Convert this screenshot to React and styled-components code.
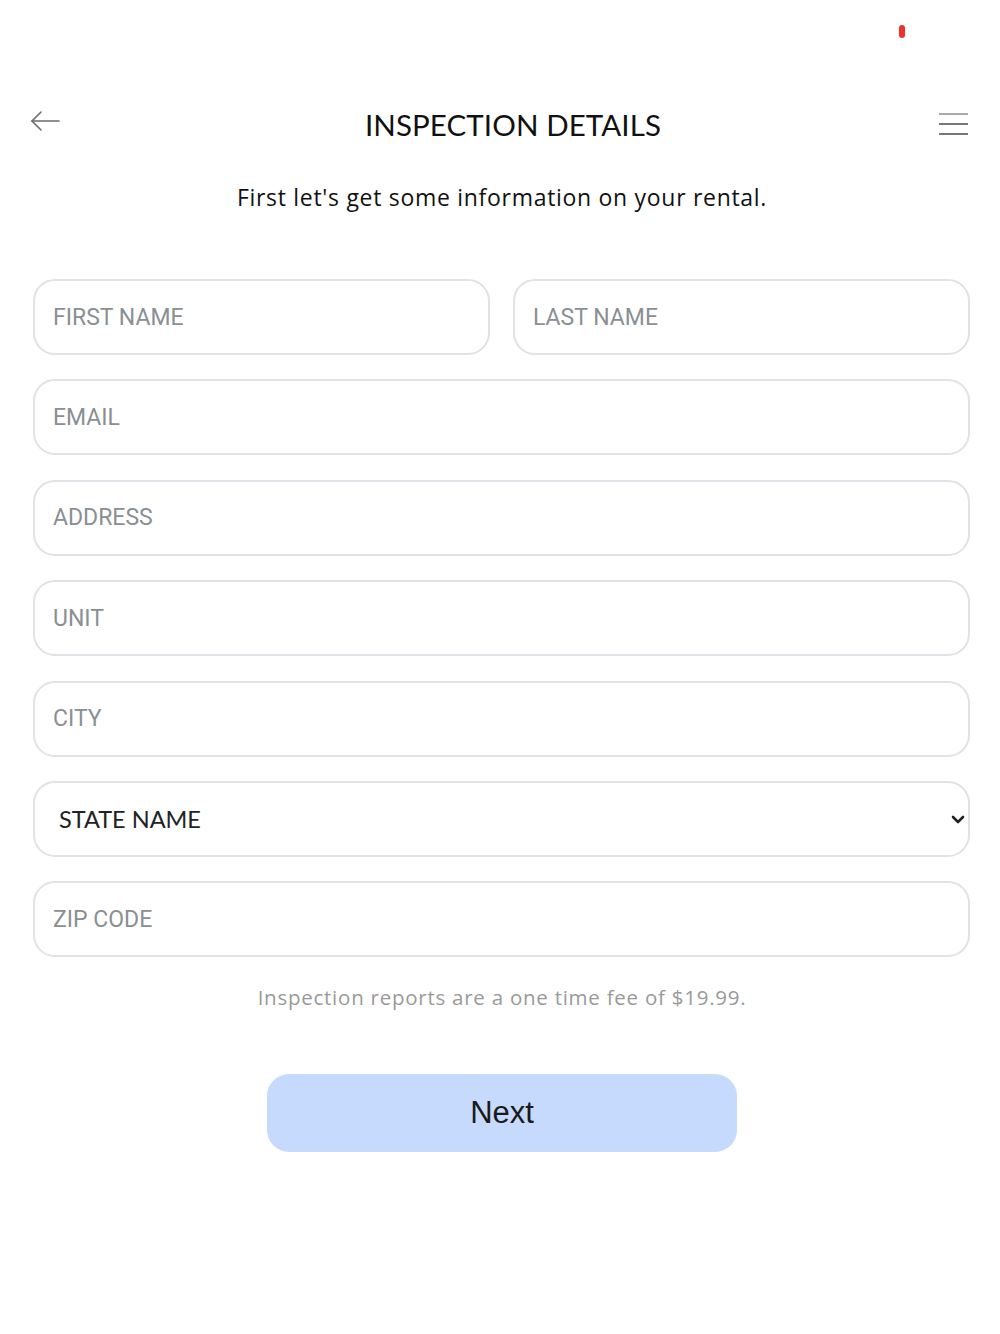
import React from "react";
import styled, { createGlobalStyle } from "styled-components";

const Global = createGlobalStyle`
  html, body { margin: 0; padding: 0; background: #fff; }
  body { font-family: "Open Sans", "Liberation Sans", sans-serif; }
  * { box-sizing: border-box; }
`;

const Page = styled.div`
  width: 1000px;
  min-height: 1334px;
  background: #fff;
  display: flex;
  flex-direction: column;
  position: relative;
`;

const StatusDot = styled.div`
  position: absolute;
  left: 899px;
  top: 25px;
  width: 6px;
  height: 13px;
  border-radius: 3px;
  background: #f0302a;
`;

const Header = styled.header`
  display: grid;
  grid-template-columns: 60px 1fr 60px;
  align-items: center;
  padding: 99px 30px 0 30px;
  height: 146px;
`;

const IconButton = styled.button`
  border: 0;
  background: none;
  padding: 0;
  width: 34px;
  height: 34px;
  display: flex;
  align-items: center;
  justify-content: ${(p) => (p.$right ? "flex-end" : "flex-start")};
  justify-self: ${(p) => (p.$right ? "end" : "start")};
  cursor: pointer;
  position: relative;
  left: ${(p) => (p.$right ? "-2px" : "0")};
  top: ${(p) => (p.$right ? "1px" : "-2px")};
`;

const Title = styled.h1`
  margin: 0;
  text-align: center;
  font-family: "Lato", "Open Sans", sans-serif;
  font-weight: 400;
  font-size: 29.5px;
  letter-spacing: 0.1px;
  color: #111;
  padding-left: 26px;
  position: relative;
  top: 2px;
`;

const Subtitle = styled.p`
  margin: 35px 0 0;
  text-align: center;
  font-family: "Open Sans", "Lato", sans-serif;
  font-size: 23px;
  color: #111;
  letter-spacing: 0.7px;
  padding-left: 4px;
`;

const Form = styled.form`
  display: flex;
  flex-direction: column;
  gap: 24.4px;
  padding: 0 30px 0 33px;
  margin-top: 66px;
`;

const Row = styled.div`
  display: grid;
  grid-template-columns: 1fr 1fr;
  gap: 23px;
`;

const Field = styled.input`
  width: 100%;
  height: 76px;
  border: 2px solid #dfe2e6;
  border-radius: 22px;
  padding: 0 18px;
  font-family: Roboto, "Liberation Sans", sans-serif;
  font-size: 23px;
  color: #333;
  background: #fff;
  outline: none;
  &::placeholder {
    color: #8a8f94;
  }
`;

const SelectWrap = styled.div`
  position: relative;
`;

const Select = styled.select`
  width: 100%;
  height: 76px;
  border: 2px solid #dfe2e6;
  border-radius: 22px;
  padding: 0 24px;
  font-family: "Lato", "Open Sans", sans-serif;
  font-size: 23.5px;
  color: #222;
  background: #fff;
  appearance: none;
  outline: none;
`;

const Chevron = styled.svg`
  position: absolute;
  right: 0;
  top: 50%;
  transform: translateY(-50%);
  pointer-events: none;
`;

const Fee = styled.p`
  margin: 26px 0 0;
  text-align: center;
  font-family: "Open Sans", "Lato", sans-serif;
  font-size: 20.5px;
  letter-spacing: 0.75px;
  color: #9a9a9a;
  padding-left: 4px;
`;

const NextButton = styled.button`
  align-self: center;
  margin: 63px 0 0 4px;
  width: 470px;
  height: 78px;
  border: 0;
  border-radius: 22px;
  background: #c5dafc;
  color: #1a1a1a;
  font-family: "Liberation Sans", Arial, sans-serif;
  font-size: 31px;
  cursor: pointer;
`;

export default function App() {
  return (
    <Page>
      <Global />
      <StatusDot />
      <Header>
        <IconButton aria-label="back">
          <svg width="30" height="22" viewBox="0 0 30 22" fill="none" stroke="#6b6b6b" strokeWidth="1.6" strokeLinecap="round">
            <path d="M29 11H2" />
            <path d="M11 2L2 11l9 9" />
          </svg>
        </IconButton>
        <Title>INSPECTION DETAILS</Title>
        <IconButton $right aria-label="menu">
          <svg width="29" height="24" viewBox="0 0 29 24" fill="none" stroke="#777" strokeWidth="2">
            <path d="M0 2h29" stroke="#aaa" />
            <path d="M0 12h29" />
            <path d="M0 22h29" />
          </svg>
        </IconButton>
      </Header>
      <Subtitle>First let's get some information on your rental.</Subtitle>
      <Form onSubmit={(e) => e.preventDefault()}>
        <Row>
          <Field placeholder="FIRST NAME" />
          <Field placeholder="LAST NAME" />
        </Row>
        <Field placeholder="EMAIL" />
        <Field placeholder="ADDRESS" />
        <Field placeholder="UNIT" />
        <Field placeholder="CITY" />
        <SelectWrap>
          <Select defaultValue="">
            <option value="">STATE NAME</option>
          </Select>
          <Chevron width="24" height="24" viewBox="0 0 24 24" fill="none" stroke="#222" strokeWidth="2.6" strokeLinecap="round" strokeLinejoin="round">
            <path d="M7 10l5 5 5-5" />
          </Chevron>
        </SelectWrap>
        <Field placeholder="ZIP CODE" />
      </Form>
      <Fee>Inspection reports are a one time fee of $19.99.</Fee>
      <NextButton>Next</NextButton>
    </Page>
  );
}
